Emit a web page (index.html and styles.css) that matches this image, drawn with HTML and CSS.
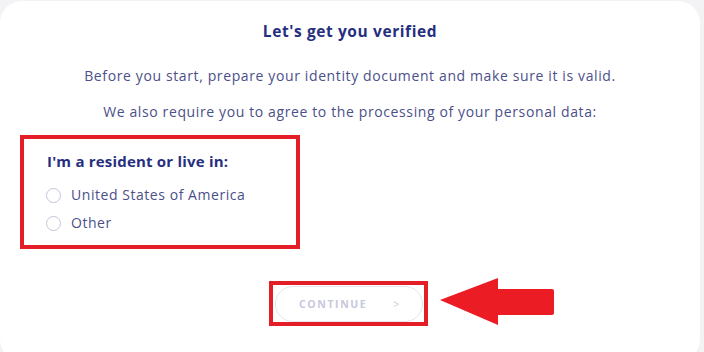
FILE: index.html
```html
<!DOCTYPE html>
<html lang="en">
<head>
    <meta charset="UTF-8">
    <meta name="viewport" content="width=device-width, initial-scale=1.0">
    <title>Verification</title>
    <link rel="stylesheet" href="styles.css">
</head>
<body>
    <div class="card">
        <h2>Let's get you verified</h2>
        <p class="intro">Before you start, prepare your identity document and make sure it is valid.</p>
        <p class="intro second">We also require you to agree to the processing of your personal data:</p>

        <div class="highlight residence">
            <h3>I'm a resident or live in:</h3>
            <label class="radio"><span class="dot"></span>United States of America</label>
            <label class="radio"><span class="dot"></span>Other</label>
        </div>

        <div class="actions">
            <div class="highlight button-box">
                <button type="button" disabled><span>CONTINUE</span><span class="chev">&gt;</span></button>
            </div>
            <svg class="arrow" width="116" height="50" viewBox="0 0 116 50">
                <path d="M0 22 L58 0 L58 11 L112 11 Q114 11 114 13 L114 35 Q114 37 112 37 L58 37 L58 47 Z" fill="#ec1c24"/>
            </svg>
        </div>
    </div>
</body>
</html>
```

FILE: styles.css
```css
* {
    margin: 0;
    padding: 0;
    box-sizing: border-box;
    font-family: "Open Sans", Arial, sans-serif;
}

body {
    background-color: #f3f3f5;
    width: 704px;
    height: 352px;
    overflow: hidden;
}

.card {
    background-color: #fff;
    width: 700px;
    height: 360px;
    margin-top: 1px;
    border-radius: 22px;
    padding-top: 19px;
}

.card h2 {
    text-align: center;
    color: #262f7f;
    font-size: 15.5px;
    font-weight: 700;
    letter-spacing: 0.6px;
    line-height: 22px;
}

.intro {
    text-align: center;
    color: #4b5089;
    font-size: 14px;
    letter-spacing: 0.62px;
    line-height: 20px;
    margin-top: 24px;
}

.intro.second {
    margin-top: 16px;
}

.highlight {
    border: 4px solid #e41e26;
}

.residence {
    width: 280px;
    height: 114px;
    margin: 13px 0 0 20px;
    padding: 11px 0 0 23px;
}

.residence h3 {
    color: #262f7f;
    font-size: 15px;
    font-weight: 700;
    letter-spacing: 0.2px;
    line-height: 22px;
    margin-bottom: 9px;
}

.radio {
    display: flex;
    align-items: center;
    color: #4b5089;
    font-size: 14px;
    letter-spacing: 0.55px;
    line-height: 28px;
}

.dot {
    width: 15px;
    height: 15px;
    border: 1.5px solid #c4c6dc;
    border-radius: 50%;
    margin: 0 10px 0 -1px;
}

.actions {
    display: flex;
    align-items: center;
    margin: 29px 0 0 269px;
}

.button-box {
    width: 159px;
    height: 45px;
    padding: 1px 0 0 2px;
}

.button-box button {
    width: 148px;
    height: 36px;
    border: 1px solid #e4e5ee;
    border-radius: 18px;
    background-color: #fff;
    color: #c6c8dd;
    font-family: "Liberation Sans", Arial, sans-serif;
    font-size: 10.5px;
    font-weight: 700;
    letter-spacing: 1.6px;
    display: flex;
    align-items: center;
    padding-left: 23px;
}

.chev {
    margin-left: 26px;
    font-weight: 400;
}

.arrow {
    margin-left: 12px;
}
```
